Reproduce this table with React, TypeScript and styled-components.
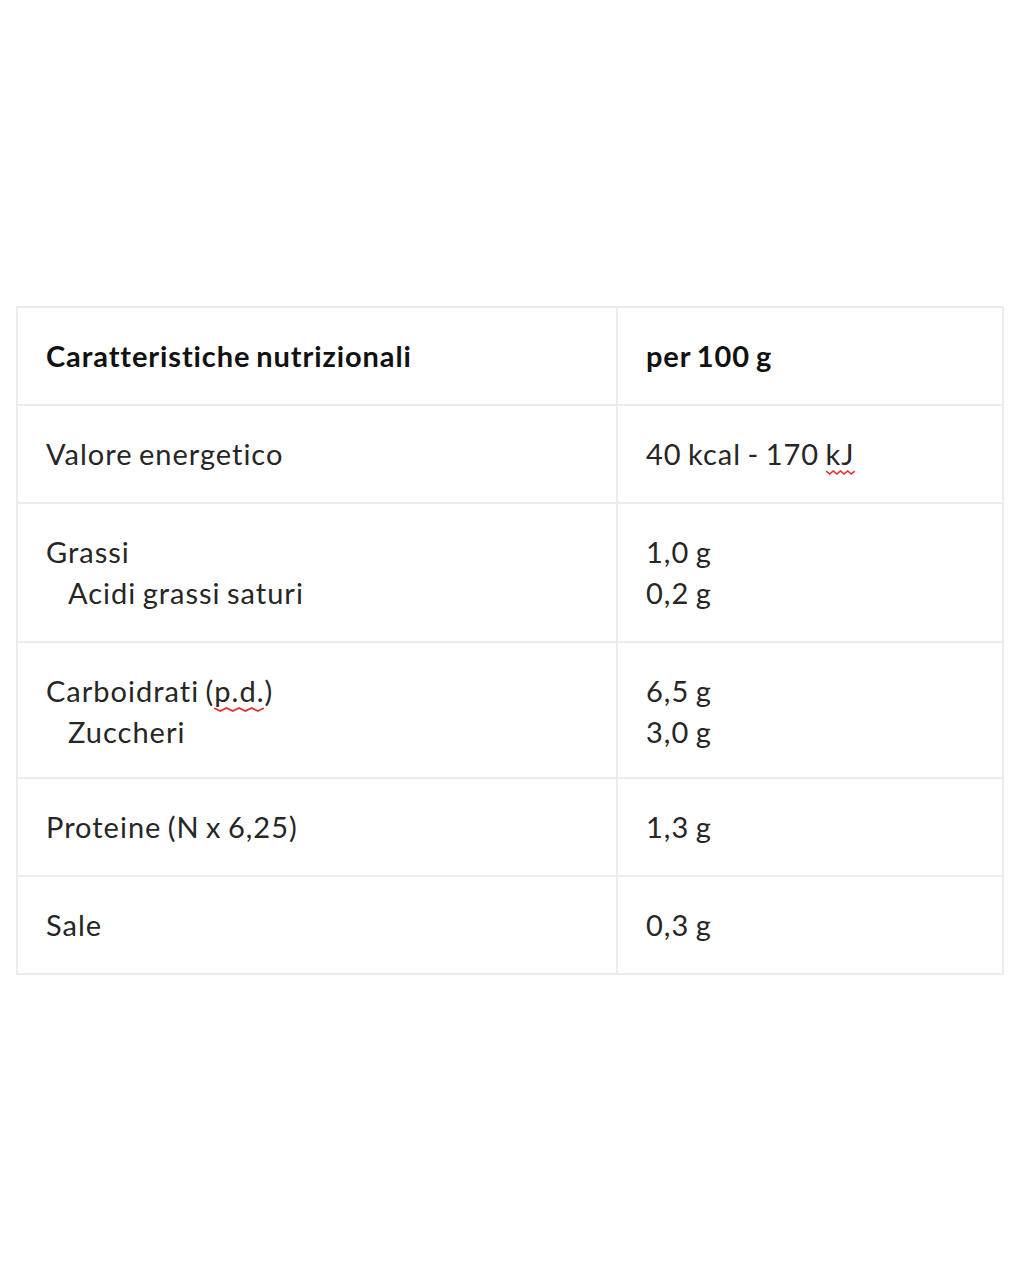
import React from 'react';
import styled, { createGlobalStyle } from 'styled-components';

const GlobalStyle = createGlobalStyle`
    body {
        margin: 0;
        background: #ffffff;
        font-family: Lato, 'Open Sans', sans-serif;
        color: #222222;
    }
`;

type Row = {
    label: string[];
    value: string[];
    head?: boolean;
    tight?: boolean;
};

const rows: Row[] = [
    { label: ['Caratteristiche nutrizionali'], value: ['per 100 g'], head: true },
    { label: ['Valore energetico'], value: ['40 kcal - 170 kJ'] },
    { label: ['Grassi', 'Acidi grassi saturi'], value: ['1,0 g', '0,2 g'] },
    { label: ['Carboidrati (p.d.)', 'Zuccheri'], value: ['6,5 g', '3,0 g'], tight: true },
    { label: ['Proteine (N x 6,25)'], value: ['1,3 g'] },
    { label: ['Sale'], value: ['0,3 g'] },
];

// red squiggle, like a spell checker marks a word
const Squiggle: React.FC<{ children: React.ReactNode }> = ({ children }) => (
    <Marked>
        {children}
        <svg viewBox="0 0 24 5" preserveAspectRatio="none">
            <path
                d="M0 1 L3 4 L6 1 L9 4 L12 1 L15 4 L18 1 L21 4 L24 1"
                fill="none"
                stroke="#e0312f"
                strokeWidth="1.4"
            />
        </svg>
    </Marked>
);

const renderText = (text: string) => {
    if (text === '40 kcal - 170 kJ') {
        return (
            <>
                40 kcal - 170 <Squiggle>kJ</Squiggle>
            </>
        );
    }
    if (text === 'Carboidrati (p.d.)') {
        return (
            <>
                Carboidrati (<Squiggle>p.d.</Squiggle>)
            </>
        );
    }
    return text;
};

const App: React.FC = () => {
    return (
        <>
            <GlobalStyle />
            <Page>
                <Table>
                    <tbody>
                        {rows.map((row, i) => (
                            <tr key={i}>
                                <Cell $head={row.head} $tight={row.tight} $wide>
                                    {row.label.map((t, j) => (
                                        <Line key={j} $sub={j > 0}>
                                            {renderText(t)}
                                        </Line>
                                    ))}
                                </Cell>
                                <Cell $head={row.head} $tight={row.tight}>
                                    {row.value.map((t, j) => (
                                        <Line key={j}>{renderText(t)}</Line>
                                    ))}
                                </Cell>
                            </tr>
                        ))}
                    </tbody>
                </Table>
            </Page>
        </>
    );
};

export default App;

const Page = styled.div`
    width: 1020px;
    min-height: 1282px;
    box-sizing: border-box;
    padding: 306px 16px 0 16px;
`;

const Table = styled.table`
    width: 988px;
    border-collapse: collapse;
    table-layout: fixed;
`;

const Cell = styled.td<{ $head?: boolean; $wide?: boolean; $tight?: boolean }>`
    box-sizing: border-box;
    width: ${(p) => (p.$wide ? '600px' : 'auto')};
    border: 2px solid #ececec;
    padding: 27px 28px ${(p) => (p.$tight ? '25px' : '28px')} 28px;
    vertical-align: top;
    font-size: 29px;
    line-height: 41px;
    letter-spacing: ${(p) => (p.$head ? '0.9px' : '1px')};
    word-spacing: -2px;
    font-variant-ligatures: none;
    font-weight: ${(p) => (p.$head ? 700 : 400)};
    color: ${(p) => (p.$head ? '#111111' : '#262626')};
`;

const Line = styled.div<{ $sub?: boolean }>`
    padding-left: ${(p) => (p.$sub ? '22px' : '0')};
    white-space: nowrap;
`;

const Marked = styled.span`
    position: relative;
    display: inline-block;
    svg {
        position: absolute;
        left: 0;
        bottom: -1px;
        width: 100%;
        height: 5px;
    }
`;
